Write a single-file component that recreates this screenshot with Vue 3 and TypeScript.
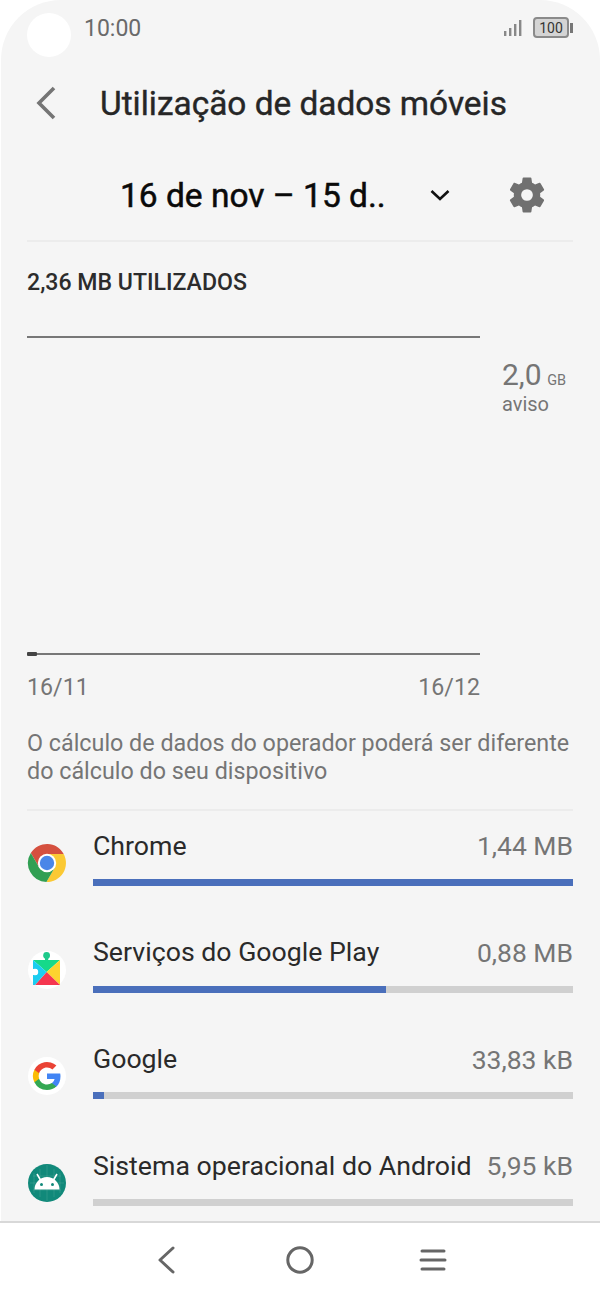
<script setup lang="ts">
interface AppRow { name: string; size: string; pct: number; icon: string }
const rows: AppRow[] = [
  { name: 'Chrome', size: '1,44 MB', pct: 100, icon: 'chrome' },
  { name: 'Serviços do Google Play', size: '0,88 MB', pct: 61, icon: 'play' },
  { name: 'Google', size: '33,83 kB', pct: 2.2, icon: 'google' },
  { name: 'Sistema operacional do Android', size: '5,95 kB', pct: 0, icon: 'android' },
]
</script>

<template>
  <div class="phone">
    <div class="screen">
      <div class="hole"></div>
      <header class="status">
        <span class="time">10:00</span>
        <svg class="signal" width="20" height="18" viewBox="0 0 20 18">
          <rect x="1" y="12" width="2.4" height="5" fill="#888" />
          <rect x="6" y="9" width="2.4" height="8" fill="#888" />
          <rect x="11" y="5" width="2.4" height="12" fill="#888" />
          <rect x="16" y="1" width="2.4" height="16" fill="#888" />
        </svg>
        <div class="battery"><span class="battery-level">100</span></div>
        <div class="battery-cap"></div>
      </header>

      <div class="titlebar">
        <svg class="back" width="24" height="36" viewBox="0 0 24 36">
          <path d="M19 3 L4 18 L19 33" fill="none" stroke="#757575" stroke-width="3.6" />
        </svg>
        <h1>Utilização de dados móveis</h1>
      </div>

      <div class="range">
        <span class="range-text">16 de nov – 15 d..</span>
        <svg class="chev" width="22" height="12" viewBox="0 0 22 12">
          <path d="M2.5 2 L11 10 L19.5 2" fill="none" stroke="#111" stroke-width="2.6" />
        </svg>
        <svg class="gear" width="44" height="44" viewBox="0 0 24 24">
          <path fill="#707070" d="M19.14 12.94c.04-.3.06-.61.06-.94 0-.32-.02-.64-.07-.94l2.03-1.58a.49.49 0 0 0 .12-.61l-1.92-3.32a.488.488 0 0 0-.59-.22l-2.39.96c-.5-.38-1.03-.7-1.62-.94l-.36-2.54a.484.484 0 0 0-.48-.41h-3.84c-.24 0-.43.17-.47.41l-.36 2.54c-.59.24-1.13.57-1.62.94l-2.39-.96c-.22-.08-.47 0-.59.22L2.74 8.87c-.12.21-.08.47.12.61l2.03 1.58c-.05.3-.09.63-.09.94s.02.64.07.94l-2.03 1.58a.49.49 0 0 0-.12.61l1.92 3.32c.12.22.37.29.59.22l2.39-.96c.5.38 1.03.7 1.62.94l.36 2.54c.05.24.24.41.48.41h3.84c.24 0 .44-.17.47-.41l.36-2.54c.59-.24 1.13-.56 1.62-.94l2.39.96c.22.08.47 0 .59-.22l1.92-3.32c.12-.22.07-.47-.12-.61l-2.01-1.58zM12 15.2A3.2 3.2 0 1 1 12 8.8a3.2 3.2 0 0 1 0 6.4z" />
        </svg>
      </div>

      <div class="used">2,36 MB UTILIZADOS</div>

      <div class="chart">
        <div class="plot">
          <div class="line-top"></div>
          <div class="line-bottom"><span class="usage-mark"></span></div>
          <div class="dates"><span>16/11</span><span>16/12</span></div>
        </div>
        <div class="limit">
          <div class="limit-val">2,0<small>GB</small></div>
          <div class="limit-label">aviso</div>
        </div>
      </div>

      <p class="note">O cálculo de dados do operador poderá ser diferente do cálculo do seu dispositivo</p>

      <ul class="apps">
        <li v-for="row in rows" :key="row.name" class="app">
          <div class="app-icon">
            <svg v-if="row.icon === 'chrome'" width="40" height="40" viewBox="0 0 40 40">
              <path d="M20 11 H36.7 A19 19 0 0 0 3.83 10 L12.2 24.5 Z" fill="#d5503f" />
              <path d="M36.7 11 A19 19 0 0 1 19.43 39 L27.8 24.5 L20 11 Z" fill="#fbc934" />
              <path d="M19.43 39 A19 19 0 0 1 3.83 10 L12.2 24.5 L27.8 24.5 Z" fill="#319f53" />
              <circle cx="20" cy="20" r="9.2" fill="#fff" />
              <circle cx="20" cy="20" r="7.2" fill="#4a86e8" />
            </svg>
            <svg v-else-if="row.icon === 'play'" width="40" height="40" viewBox="0 0 40 40">
              <circle cx="20" cy="20" r="19" fill="#fff" />
              <circle cx="19.6" cy="5.5" r="3.4" fill="#1ec98a" />
              <rect x="18" y="6" width="3.2" height="5" fill="#1ec98a" />
              <path d="M6 10 H33 L19.6 22 Z" fill="#16d98a" />
              <path d="M33 10 V35 L19.6 22 Z" fill="#fdd32f" />
              <path d="M33 35 H8 L19.6 22 Z" fill="#f5364f" />
              <path d="M6 10 L19.6 22 L8 35 H6 Z" fill="#1ccdf0" />
              <circle cx="8" cy="22" r="3.2" fill="#fff" />
              <rect x="5" y="19" width="5" height="6" fill="#fff" />
            </svg>
            <svg v-else-if="row.icon === 'google'" width="40" height="40" viewBox="0 0 40 40">
              <circle cx="20" cy="20" r="19" fill="#fff" />
              <path d="M33.5 20.3c0-1-.1-2-.3-2.9H20v5.5h7.6a6.5 6.5 0 0 1-2.8 4.3v3.5h4.5c2.7-2.4 4.2-6 4.2-10.4z" fill="#4285f4" />
              <path d="M20 34c3.8 0 7-1.3 9.3-3.4l-4.5-3.5c-1.3.8-2.9 1.4-4.8 1.4-3.7 0-6.8-2.5-7.9-5.8H7.4v3.6A14 14 0 0 0 20 34z" fill="#34a853" />
              <path d="M12.1 22.7a8.4 8.4 0 0 1 0-5.4v-3.6H7.4a14 14 0 0 0 0 12.6z" fill="#fbbc05" />
              <path d="M20 11.5c2.1 0 4 .7 5.4 2.1l4-4A14 14 0 0 0 7.4 13.7l4.7 3.6c1.1-3.3 4.2-5.8 7.9-5.8z" fill="#ea4335" />
            </svg>
            <svg v-else width="40" height="40" viewBox="0 0 40 40">
              <circle cx="20" cy="20" r="19" fill="#11897a" />
              <path d="M7 10 V30 M13 6 V34 M20 2 V38 M27 6 V34 M33 10 V30 M6 13 H34 M3 20 H37 M6 27 H34" stroke="#fff" stroke-opacity=".1" stroke-width="1" />
              <path d="M7.5 26.5 a12.5 12.5 0 0 1 25 0 Z" fill="#fff" />
              <path d="M10 11 L13.5 17 M30 11 L26.5 17" stroke="#fff" stroke-width="1.6" />
              <circle cx="14.5" cy="21.5" r="1.5" fill="#11897a" />
              <circle cx="25.5" cy="21.5" r="1.5" fill="#11897a" />
            </svg>
          </div>
          <div class="app-body">
            <div class="app-head">
              <span class="app-name">{{ row.name }}</span>
              <span class="app-size">{{ row.size }}</span>
            </div>
            <div class="track"><div class="fill" :style="{ width: row.pct + '%' }"></div></div>
          </div>
        </li>
      </ul>
    </div>

    <nav class="navbar">
      <svg width="30" height="30" viewBox="0 0 30 30">
        <path d="M21 3 L8 15 L21 27" fill="none" stroke="#666" stroke-width="3" stroke-linecap="round" stroke-linejoin="round" />
      </svg>
      <svg width="30" height="30" viewBox="0 0 30 30">
        <circle cx="15" cy="15" r="12.2" fill="none" stroke="#666" stroke-width="3" />
      </svg>
      <svg width="30" height="30" viewBox="0 0 30 30">
        <path d="M4 6 H26 M3 15 H27 M4 24 H26" fill="none" stroke="#666" stroke-width="3" stroke-linecap="round" />
      </svg>
    </nav>
  </div>
</template>

<style>
html, body { margin: 0; background: #fff; }
</style>

<style scoped>
.phone {
  width: 600px;
  height: 1300px;
  background: #fff;
  overflow: hidden;
  font-family: Roboto, "Liberation Sans", sans-serif;
  display: flex;
  flex-direction: column;
}
.screen {
  position: relative;
  height: 1221px;
  margin-left: 1px;
  padding: 0 27px 0 26px;
  box-sizing: border-box;
  background: #f5f5f5;
  border-radius: 60px 60px 0 0;
  overflow: hidden;
  flex: none;
  display: flex;
  flex-direction: column;
}
.hole {
  position: absolute;
  left: 26px;
  top: 13px;
  width: 44px;
  height: 44px;
  border-radius: 50%;
  background: #fff;
}
.status {
  height: 56px;
  display: flex;
  align-items: center;
  flex: none;
  padding-left: 57px;
}
.time { font-size: 23px; color: #6a6a6a; flex: 1; }
.signal { margin-right: 10px; }
.battery {
  width: 32px;
  height: 17px;
  border: 2px solid #8a8a8a;
  border-radius: 4px;
  background: #d4d4d4;
  box-sizing: content-box;
  text-align: center;
  line-height: 17px;
  margin-top: -1px;
}
.battery-level { font-size: 14px; color: #333; }
.battery-cap { width: 3px; height: 10px; background: #777; margin-left: 1px; margin-top: -1px; }
.titlebar {
  height: 64px;
  margin-top: 15px;
  display: flex;
  align-items: center;
  flex: none;
}
.back { margin-left: 8px; }
h1 {
  margin: 0 0 0 41px;
  font-size: 33.4px;
  font-weight: 400;
  -webkit-text-stroke: 0.4px #262626;
  color: #262626;
  white-space: nowrap;
}
.range {
  flex: none;
  display: flex;
  align-items: center;
  border-bottom: 2px solid #ececec;
  margin-top: 12px;
  padding-top: 3px;
  box-sizing: border-box;
  height: 95px;
}
.range-text {
  margin-left: 93px;
  font-size: 33.5px;
  font-weight: 400;
  -webkit-text-stroke: 0.5px #0a0a0a;
  color: #0a0a0a;
  white-space: nowrap;
  width: 309px;
}
.chev { margin-right: 50px; }
.gear { margin-left: auto; margin-right: 24px; }
.used {
  margin-top: 29px;
  font-size: 23.1px;
  font-weight: 500;
  color: #2c2c2c;
  line-height: 24px;
}
.chart { display: flex; margin-top: 41px; flex: none; }
.plot { width: 453px; flex: none; }
.line-top { height: 2px; background: #777; }
.line-bottom { margin-top: 315px; height: 2px; background: #777; position: relative; }
.usage-mark { position: absolute; left: 0; top: -1px; width: 10px; height: 4px; background: #444; border-radius: 1px; }
.dates {
  display: flex;
  justify-content: space-between;
  margin-top: 18px;
  font-size: 23.2px;
  color: #757575;
  line-height: 28px;
}
.limit { margin-left: 22px; margin-top: 22px; color: #757575; }
.limit-val { font-size: 30px; line-height: 34px; }
.limit-val small { font-size: 14.5px; margin-left: 5.5px; }
.limit-label { font-size: 20px; line-height: 24px; margin-top: -6px; }
.note {
  margin: 28px 0 0;
  font-size: 23.3px;
  line-height: 28px;
  color: #757575;
  padding-bottom: 24px;
  border-bottom: 2px solid #ececec;
}
.apps { list-style: none; margin: 0; padding: 0; }
.app { display: flex; height: 106.65px; }
.app-icon { width: 66px; padding-top: 32px; flex: none; box-sizing: border-box; }
.app-body { flex: 1; min-width: 0; padding-top: 18.8px; }
.app-head { display: flex; justify-content: space-between; align-items: center; height: 32px; }
.app-name { font-size: 26.7px; color: #2a2a2a; white-space: nowrap; }
.app-size { font-size: 26.5px; color: #757575; white-space: nowrap; }
.track { height: 7px; background: #d0d0d0; margin-top: 17.2px; }
.fill { height: 100%; background: #4a6fbb; }
.navbar {
  flex: 1;
  border-top: 2px solid #d8d8d8;
  background: #fff;
  display: flex;
  align-items: center;
  justify-content: center;
  gap: 103px;
  padding-bottom: 4px;
  box-sizing: border-box;
}
</style>
